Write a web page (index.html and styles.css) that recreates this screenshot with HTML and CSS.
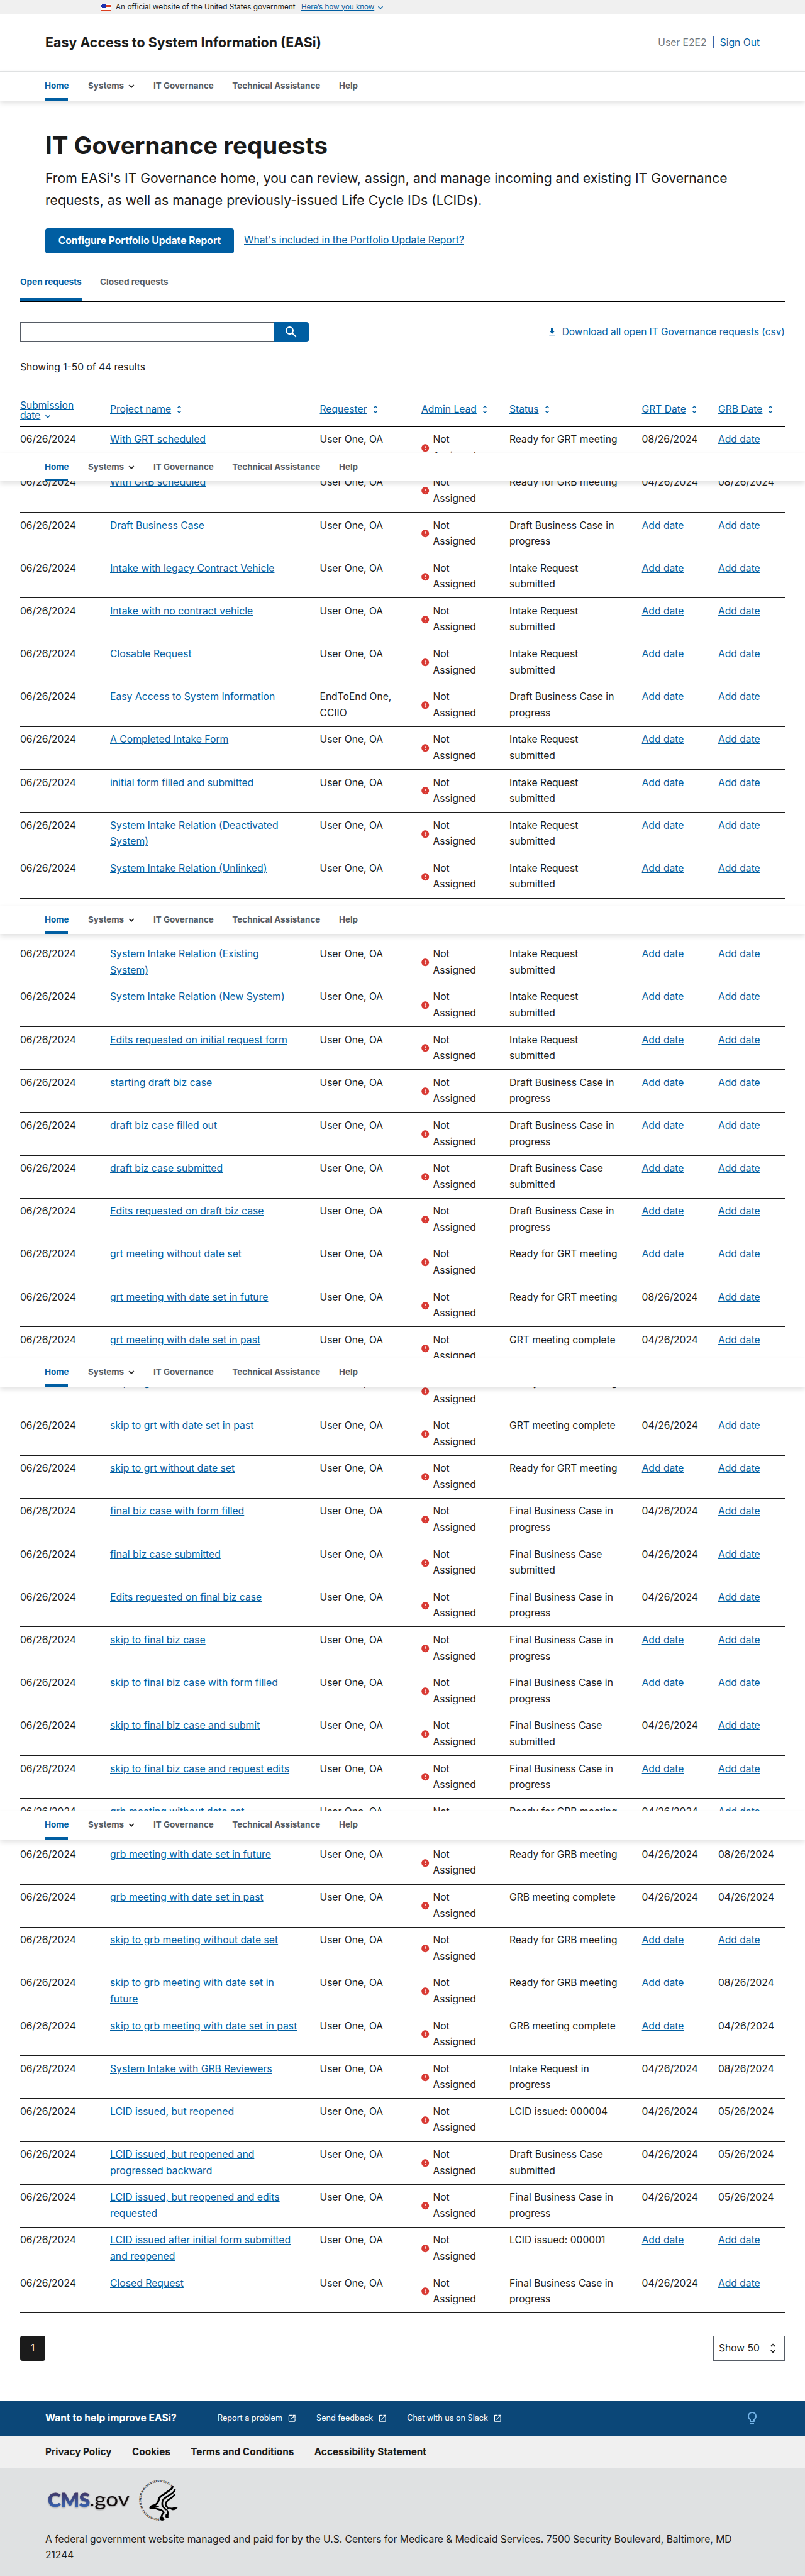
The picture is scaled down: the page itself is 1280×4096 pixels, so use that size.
FILE: index.html
```html
<!DOCTYPE html>
<html lang="en">
<head>
<meta charset="utf-8">
<title>IT Governance requests - EASi</title>
<link rel="stylesheet" href="styles.css">
</head>
<body>
<svg class="sprite" aria-hidden="true">
  <symbol id="i-expand" viewBox="0 0 24 24"><path d="M16.59 8.59 12 13.17 7.41 8.59 6 10l6 6 6-6z"/></symbol>
  <symbol id="i-unfold" viewBox="0 0 24 24"><path d="M12 5.83 15.17 9l1.41-1.41L12 3 7.41 7.59 8.83 9 12 5.83zm0 12.34L8.83 15l-1.41 1.41L12 21l4.59-4.59L15.17 15 12 18.17z"/></symbol>
  <symbol id="i-error" viewBox="0 0 24 24"><path d="M12 2C6.48 2 2 6.48 2 12s4.48 10 10 10 10-4.48 10-10S17.52 2 12 2zm1 15h-2v-2h2v2zm0-4h-2V7h2v6z"/></symbol>
  <symbol id="i-download" viewBox="0 0 24 24"><path d="M19 9h-4V3H9v6H5l7 7 7-7zM5 18v2h14v-2H5z"/></symbol>
  <symbol id="i-search" viewBox="0 0 24 24"><path d="M15.5 14h-.79l-.28-.27A6.471 6.471 0 0 0 16 9.5 6.5 6.5 0 1 0 9.5 16c1.61 0 3.09-.59 4.23-1.57l.27.28v.79l5 4.99L20.49 19l-4.99-5zm-6 0C7.01 14 5 11.99 5 9.5S7.01 5 9.5 5 14 7.01 14 9.5 11.99 14 9.5 14z"/></symbol>
  <symbol id="i-launch" viewBox="0 0 24 24"><path d="M19 19H5V5h7V3H5a2 2 0 0 0-2 2v14a2 2 0 0 0 2 2h14c1.1 0 2-.9 2-2v-7h-2v7zM14 3v2h3.59l-9.83 9.83 1.41 1.41L19 6.41V10h2V3h-7z"/></symbol>
  <symbol id="i-bulb" viewBox="0 0 24 24"><path d="M9 21c0 .55.45 1 1 1h4c.55 0 1-.45 1-1v-1H9v1zm3-19C8.14 2 5 5.14 5 9c0 2.38 1.19 4.47 3 5.74V17c0 .55.45 1 1 1h6c.55 0 1-.45 1-1v-2.26c1.81-1.27 3-3.36 3-5.74 0-3.86-3.14-7-7-7zm2.85 11.1-.85.6V16h-4v-2.3l-.85-.6A4.997 4.997 0 0 1 7 9c0-2.76 2.24-5 5-5s5 2.24 5 5c0 1.63-.8 3.16-2.15 4.1z"/></symbol>
</svg>

<section class="banner">
  <svg class="flag" viewBox="0 0 16 11"><path fill="#fff" d="M0 0h16v11H0z"/><path fill="#db3e1f" d="M0 0h16v1H0zM0 2h16v1H0zM0 4h16v1H0zM0 6h16v1H0zM0 8h16v1H0zM0 10h16v1H0z"/><path fill="#1e33b1" d="M0 0h8v7H0z"/><path fill="#fff" d="M1 1h1v1H1zM3 1h1v1H3zM5 1h1v1H5zM2 3h1v1H2zM4 3h1v1H4zM6 3h1v1H6zM1 5h1v1H1zM3 5h1v1H3zM5 5h1v1H5z"/></svg>
  <span class="banner-text">An official website of the United States government</span>
  <a class="banner-link" href="#">Here’s how you know</a>
  <svg class="ic16 blue"><use href="#i-expand"/></svg>
</section>

<header class="header">
  <span class="site-title">Easy Access to System Information (EASi)</span>
  <div class="user"><span class="user-name">User E2E2</span><span class="bar">|</span><a href="#">Sign Out</a></div>
</header>

<nav class="nav" id="nav">
  <a class="nav-item current" href="#">Home</a>
  <a class="nav-item has-menu" href="#">Systems<svg class="ic16"><use href="#i-expand"/></svg></a>
  <a class="nav-item" href="#">IT Governance</a>
  <a class="nav-item" href="#">Technical Assistance</a>
  <a class="nav-item" href="#">Help</a>
</nav>

<main class="main">
  <section class="intro">
    <h1>IT Governance requests</h1>
    <p>From EASi's IT Governance home, you can review, assign, and manage incoming and existing IT Governance<br>requests, as well as manage previously-issued Life Cycle IDs (LCIDs).</p>
    <div class="actions"><a class="button" href="#">Configure Portfolio Update Report</a><a class="actions-link" href="#">What's included in the Portfolio Update Report?</a></div>
  </section>

  <div class="tabs"><a class="tab selected" href="#">Open requests</a><a class="tab" href="#">Closed requests</a></div>

  <div class="tools">
    <form class="search"><input type="text" aria-label="Search"><button type="button" aria-label="Search"><svg class="ic24"><use href="#i-search"/></svg></button></form>
    <div class="download"><svg class="ic16"><use href="#i-download"/></svg><a href="#">Download all open IT Governance requests (csv)</a></div>
  </div>

  <p class="showing">Showing 1-50 of 44 results</p>

  <div class="table" id="table">
    <div class="row head">
      <div class="sorted"><a href="#">Submission</a><br><a href="#">date</a><svg class="ic16"><use href="#i-expand"/></svg></div>
      <div><a href="#">Project name</a><svg class="ic16"><use href="#i-unfold"/></svg></div>
      <div><a href="#">Requester</a><svg class="ic16"><use href="#i-unfold"/></svg></div>
      <div><a href="#">Admin Lead</a><svg class="ic16"><use href="#i-unfold"/></svg></div>
      <div><a href="#">Status</a><svg class="ic16"><use href="#i-unfold"/></svg></div>
      <div><a href="#">GRT Date</a><svg class="ic16"><use href="#i-unfold"/></svg></div>
      <div><a href="#">GRB Date</a><svg class="ic16"><use href="#i-unfold"/></svg></div>
    </div>
  </div>

  <div class="pager">
    <span class="page">1</span>
    <span class="page-size">Show 50<svg class="ic20"><use href="#i-unfold"/></svg></span>
  </div>
</main>

<footer>
  <div class="improve">
    <strong>Want to help improve EASi?</strong>
    <a href="#">Report a problem<svg class="ic14"><use href="#i-launch"/></svg></a>
    <a href="#">Send feedback<svg class="ic14"><use href="#i-launch"/></svg></a>
    <a href="#">Chat with us on Slack<svg class="ic14"><use href="#i-launch"/></svg></a>
    <svg class="ic24 bulb"><use href="#i-bulb"/></svg>
  </div>
  <div class="legal"><a href="#">Privacy Policy</a><a href="#">Cookies</a><a href="#">Terms and Conditions</a><a href="#">Accessibility Statement</a></div>
  <div class="agency">
    <svg class="logos" viewBox="0 0 230 85">
      <defs>
        <linearGradient id="cms" x1="0" y1="0" x2="0" y2="1"><stop offset=".25" stop-color="#40386a"/><stop offset=".85" stop-color="#3564b4"/></linearGradient>
        <path id="ring" d="M187.4 70.6A29 29 0 1 1 206 19.4"/>
      </defs>
      <g class="shadowed">
        <text class="cms" x="10" y="52" textLength="67" lengthAdjust="spacingAndGlyphs">CMS</text>
        <text class="gov" x="76" y="51" textLength="64" lengthAdjust="spacingAndGlyphs">.gov</text>
      </g>
      <text class="seal"><textPath href="#ring" textLength="112" lengthAdjust="spacingAndGlyphs">DEPARTMENT OF HEALTH &amp; HUMAN SERVICES·USA</textPath></text>
      <g transform="scale(.33333)" fill="none" stroke="#000" stroke-linejoin="round">
        <path stroke-width="9" d="M627 57Q622 72 598 86L570 105Q560 113 558 127Q553 148 524 152"/>
        <path stroke-width="8" d="M636 72Q636 86 612 98L587 115Q576 123 576 138Q574 148 582 158L594 171"/>
        <path stroke-width="8" d="M635 96Q630 107 612 118Q595 128 592 141Q590 150 600 158L604 167"/>
        <path stroke-width="8" d="M515 163Q535 160 552 166Q583 173 583 184Q572 195 573 203"/>
        <path stroke-width="6" d="M518 154Q535 157 560 156M596 167Q606 182 602 190"/>
        <path fill="#000" stroke-width="2" d="M565 205Q578 198 582 209Q580 217 588 215Q578 225 567 218zM593 193Q600 184 606 193Q602 203 606 205Q596 212 591 203zM606 158Q622 165 630 158L648 160Q640 172 624 171Q614 165 606 162z"/>
      </g>
    </svg>
    <p>A federal government website managed and paid for by the U.S. Centers for Medicare &amp; Medicaid Services. 7500 Security Boulevard, Baltimore, MD<br>21244</p>
  </div>
</footer>
<script src="app.js"></script>
</body>
</html>
```
FILE: styles.css
```css
* { box-sizing: border-box; }
body {
  margin: 0;
  position: relative;
  height: 4096px;
  overflow: hidden;
  font: 15.64px/25.6px Inter, "Liberation Sans", sans-serif;
  color: #1b1b1b;
  background: #fff;
}
a { color: #005ea2; }
p, h1 { margin: 0; }
svg { fill: currentColor; flex: none; }
.sprite { display: none; }
.ic14 { width: 14.5px; height: 14.5px; }
.ic16 { width: 16px; height: 16px; }
.ic20 { width: 20px; height: 20px; }
.ic24 { width: 24px; height: 24px; }

.banner {
  display: flex;
  align-items: center;
  height: 22px;
  padding: 0 0 1px 160px;
  background: #f0f0f0;
  font-size: 11.78px;
  line-height: 16px;
}
.flag { width: 16px; height: 11px; margin-top: 2px; }
.banner-text { margin-left: 8px; width: 287px; white-space: nowrap; }
.banner-link { margin-left: 8px; font-size: 11.55px; }
.blue { color: #005ea2; margin: 3px 0 0 2px; }

.header {
  display: flex;
  align-items: center;
  justify-content: space-between;
  height: 91px;
  padding: 0 72px;
}
.site-title { font-size: 21.42px; font-weight: 700; }
.user { display: flex; }
.user-name { color: #71767a; }
.bar { margin: 0 8px; }

.nav {
  display: flex;
  height: 47px;
  padding: 0 72px 0 71px;
  border-top: 1px solid #dfe1e2;
  background: #fff;
  box-shadow: 0 4px 8px rgba(0, 0, 0, .12);
  font-size: 13.44px;
  font-weight: 700;
}
.nav-item {
  display: flex;
  align-items: center;
  margin-right: 29.5px;
  color: #565c65;
  text-decoration: none;
  white-space: nowrap;
}
.nav-item.current {
  width: 38px;
  margin-right: 30px;
  color: #005ea2;
  background: linear-gradient(#005ea2, #005ea2) 1px 100% / 36px 4px no-repeat;
}
.nav-item.has-menu { margin-left: 1px; margin-right: 27px; }
.has-menu svg { margin-left: 4px; color: #1b1b1b; stroke: currentColor; stroke-width: .8; }
.nav.stuck {
  position: absolute;
  left: 0;
  right: 0;
  height: 45px;
  border-top: 0;
}
.stuck-1 { top: 720px; }
.stuck-2 { top: 1440px; }
.stuck-3 { top: 2159.5px; }
.stuck-4 { top: 2879.5px; }

.main { padding: 0 32px; }
.intro { padding: 46px 40px 0; }
h1 { font-size: 38.46px; line-height: 50px; font-weight: 700; }
.intro p { margin-top: 9.6px; font-size: 21.15px; line-height: 35px; white-space: nowrap; }
.actions { display: flex; align-items: center; margin-top: 27.4px; }
.button {
  display: flex;
  align-items: center;
  justify-content: center;
  width: 300px;
  height: 40px;
  border-radius: 4px;
  background: #005ea2;
  color: #fff;
  font-weight: 700;
  text-decoration: none;
  white-space: nowrap;
}
.actions-link { margin: 0 0 2px 16px; }

.tabs {
  display: flex;
  gap: 29px;
  margin-top: 21px;
  border-bottom: 1px solid #000;
}
.tab {
  height: 55px;
  padding-top: 14.4px;
  color: #565c65;
  font-size: 13.65px;
  font-weight: 700;
  line-height: 20px;
  text-decoration: none;
}
.tab.selected { width: 98px; color: #005ea2; border-bottom: 5px solid #005ea2; white-space: nowrap; }

.tools { display: flex; justify-content: space-between; align-items: center; margin-top: 32px; }
.search { display: flex; width: 459px; height: 32px; }
.search input { width: 403px; border: 1px solid #565c65; border-right: 0; background: #fff; padding: 0 8px; }
.search button {
  display: flex;
  align-items: center;
  justify-content: center;
  width: 56px;
  padding: 0;
  border: 0;
  border-radius: 0 4px 4px 0;
  background: #005ea2;
  color: #fff;
}
.download { display: flex; align-items: center; gap: 8px; color: #005ea2; }
.download a { font-size: 15.42px; }
.showing { margin-top: 30px; line-height: 20px; }

.row {
  display: grid;
  grid-template-columns: 143px 333.5px 161.5px 140px 210.6px 121.4px 106px;
  height: 68.18px;
  padding-top: 7.5px;
  border-bottom: 1px solid #1b1b1b;
}
.name { font-size: 15.74px; }
.head {
  align-items: end;
  height: 84.7px;
  padding: 0 0 7.4px;
  border-color: #000;
  line-height: 16.5px;
  color: #005ea2;
}
.head div { display: flex; align-items: center; margin-bottom: 10.7px; white-space: nowrap; }
.head svg { margin-left: 5px; }
.head .sorted { display: block; margin: 0; }
.head .sorted svg { margin: -4px 0 0 4px; vertical-align: -4px; }
.lead { display: flex; align-items: center; align-self: start; }
.lead svg { width: 14.4px; height: 14.4px; margin: 1px 4.6px 0 -.6px; color: #d83933; }

.pager { display: flex; justify-content: space-between; margin-top: 36px; }
.page {
  width: 40px;
  height: 40px;
  border-radius: 4px;
  background: #1b1b1b;
  color: #fff;
  line-height: 40px;
  text-align: center;
}
.page-size {
  display: flex;
  align-items: center;
  justify-content: space-between;
  width: 114px;
  height: 40px;
  padding: 0 8px;
  border: 1px solid #565c65;
}

footer { margin-top: 63px; }
.improve {
  display: flex;
  align-items: center;
  height: 56px;
  padding: 0 72px 1px;
  background: #0b4778;
  color: #fff;
  white-space: nowrap;
}
.improve strong { width: 274px; font-size: 15.6px; }
.improve a { display: flex; align-items: center; margin-right: 31.5px; color: #fff; font-size: 12.65px; text-decoration: none; }
.improve a svg { margin-left: 8px; margin-top: 1px; }
.bulb { margin-left: auto; color: #73b3e7; }
.legal {
  display: flex;
  align-items: center;
  gap: 32.4px;
  height: 51px;
  padding: 0 72px;
  background: #f0f0f0;
  font-size: 15.35px;
  font-weight: 700;
}
.legal a { color: #1b1b1b; text-decoration: none; }
.agency { height: 172px; padding: 10px 66px; background: #dfe1e2; }
.logos { display: block; width: 230px; height: 85px; }
.agency p { margin: 5.4px 6px 0; font-size: 15.61px; white-space: nowrap; }
.shadowed { filter: drop-shadow(0 1px 1px rgba(0, 0, 0, .35)); }
.cms { font: 900 31px Lato, sans-serif; fill: url(#cms); stroke: url(#cms); stroke-width: .8; }
.gov { font: 400 31px Lato, sans-serif; fill: #120c0c; }
.seal { font: 700 4.6px "Liberation Serif", serif; fill: #000; }
```
FILE: app.js
```js
const A = 'Add date', APR = '04/26/2024', MAY = '05/26/2024', AUG = '08/26/2024';
const DRAFT = 'Draft Business Case in<br>progress', DRAFT_SUB = 'Draft Business Case<br>submitted';
const FINAL = 'Final Business Case in<br>progress', FINAL_SUB = 'Final Business Case<br>submitted';
const INTAKE = 'Intake Request<br>submitted';
const GRT = 'Ready for GRT meeting', GRT_DONE = 'GRT meeting complete';
const GRB = 'Ready for GRB meeting', GRB_DONE = 'GRB meeting complete';

const requests = [
  ['With GRT scheduled', GRT, AUG, A],
  ['With GRB scheduled', GRB, APR, AUG],
  ['Draft Business Case', DRAFT, A, A],
  ['Intake with legacy Contract Vehicle', INTAKE, A, A],
  ['Intake with no contract vehicle', INTAKE, A, A],
  ['Closable Request', INTAKE, A, A],
  ['Easy Access to System Information', DRAFT, A, A, 'EndToEnd One,<br>CCIIO'],
  ['A Completed Intake Form', INTAKE, A, A],
  ['initial form filled and submitted', INTAKE, A, A],
  ['System Intake Relation (Deactivated<br>System)', INTAKE, A, A],
  ['System Intake Relation (Unlinked)', INTAKE, A, A],
  null,
  ['System Intake Relation (Existing<br>System)', INTAKE, A, A],
  ['System Intake Relation (New System)', INTAKE, A, A],
  ['Edits requested on initial request form', INTAKE, A, A],
  ['starting draft biz case', DRAFT, A, A],
  ['draft biz case filled out', DRAFT, A, A],
  ['draft biz case submitted', DRAFT_SUB, A, A],
  ['Edits requested on draft biz case', DRAFT, A, A],
  ['grt meeting without date set', GRT, A, A],
  ['grt meeting with date set in future', GRT, AUG, A],
  ['grt meeting with date set in past', GRT_DONE, APR, A],
  ['skip to grt with date set in future', GRT, AUG, A],
  ['skip to grt with date set in past', GRT_DONE, APR, A],
  ['skip to grt without date set', GRT, A, A],
  ['final biz case with form filled', FINAL, APR, A],
  ['final biz case submitted', FINAL_SUB, APR, A],
  ['Edits requested on final biz case', FINAL, APR, A],
  ['skip to final biz case', FINAL, A, A],
  ['skip to final biz case with form filled', FINAL, A, A],
  ['skip to final biz case and submit', FINAL_SUB, APR, A],
  ['skip to final biz case and request edits', FINAL, A, A],
  ['grb meeting without date set', GRB, APR, A],
  ['grb meeting with date set in future', GRB, APR, AUG],
  ['grb meeting with date set in past', GRB_DONE, APR, APR],
  ['skip to grb meeting without date set', GRB, A, A],
  ['skip to grb meeting with date set in<br>future', GRB, A, AUG],
  ['skip to grb meeting with date set in past', GRB_DONE, A, APR],
  ['System Intake with GRB Reviewers', 'Intake Request in<br>progress', APR, AUG],
  ['LCID issued, but reopened', 'LCID issued: 000004', APR, MAY],
  ['LCID issued, but reopened and<br>progressed backward', DRAFT_SUB, APR, MAY],
  ['LCID issued, but reopened and edits<br>requested', FINAL, APR, MAY],
  ['LCID issued after initial form submitted<br>and reopened', 'LCID issued: 000001', A, A],
  ['Closed Request', FINAL, APR, A],
];

const link = (text) => `<a href="#">${text}</a>`;
const date = (value) => (value === A ? link(value) : value);

document.getElementById('table').insertAdjacentHTML('beforeend', requests.map((r) => {
  if (!r) return '<div class="row"></div>';
  const [name, status, grt, grb, requester = 'User One, OA'] = r;
  return `<div class="row"><div>06/26/2024</div><div class="name">${link(name)}</div><div>${requester}</div>
    <div class="lead"><svg><use href="#i-error"/></svg><span>Not<br>Assigned</span></div>
    <div>${status}</div><div>${date(grt)}</div><div>${date(grb)}</div></div>`;
}).join(''));

// The navigation bar repeats over the table at each viewport break.
const nav = document.getElementById('nav');
for (let i = 1; i <= 4; i++) {
  const copy = nav.cloneNode(true);
  copy.removeAttribute('id');
  copy.classList.add('stuck', `stuck-${i}`);
  document.body.append(copy);
}
```
